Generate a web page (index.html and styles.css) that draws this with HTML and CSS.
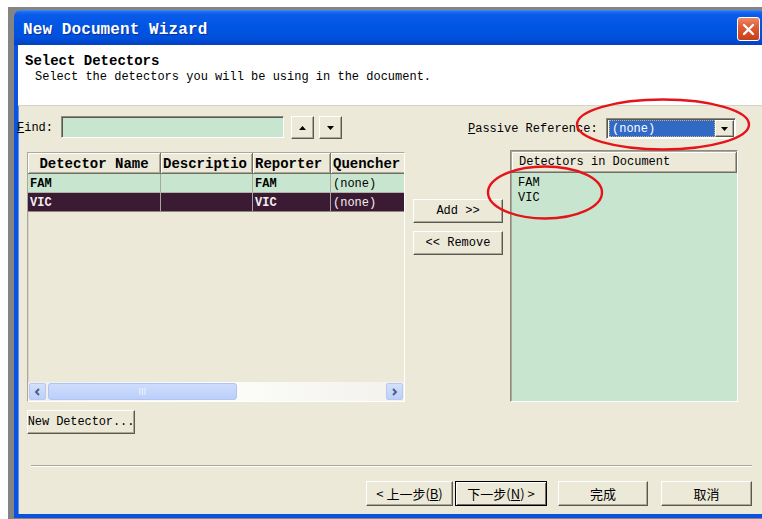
FILE: index.html
```html
<!DOCTYPE html>
<html>
<head>
<meta charset="utf-8">
<title>New Document Wizard</title>
<link rel="stylesheet" href="styles.css">
</head>
<body>
<div class="desk">
  <div class="window">
    <div class="titlebar">
      <span class="title">New Document Wizard</span>
      <span class="close">
        <svg width="13" height="13" viewBox="0 0 13 13"><path d="M2 2 L11 11 M11 2 L2 11" stroke="#fff" stroke-width="2.4" stroke-linecap="round"/></svg>
      </span>
    </div>
    <div class="frame">
      <div class="header">
        <div class="h-title">Select Detectors</div>
        <div class="h-sub">Select the detectors you will be using in the document.</div>
      </div>
      <div class="content">
        <div class="toprow">
          <div class="find">
            <span class="find-label"><u>F</u>ind:</span>
            <div class="field"></div>
            <button class="btn spin first"><svg width="7" height="4" viewBox="0 0 7 4"><path d="M3.5 0 L7 4 L0 4 Z" fill="#000"/></svg></button>
            <button class="btn spin"><svg width="7" height="4" viewBox="0 0 7 4"><path d="M0 0 L7 0 L3.5 4 Z" fill="#000"/></svg></button>
          </div>
          <div class="passive">
            <span class="passive-label"><u>P</u>assive Reference:</span>
            <div class="combo">
              <span class="combo-value"><span class="combo-text">(none)</span></span>
              <span class="btn combo-btn"><svg width="7" height="4" viewBox="0 0 7 4"><path d="M0 0 L7 0 L3.5 4 Z" fill="#000"/></svg></span>
            </div>
          </div>
        </div>

        <div class="main">
          <div class="grid">
            <div class="grid-head">
              <div class="hc c1 centered">Detector Name</div>
              <div class="hc c2">Descriptio</div>
              <div class="hc c3">Reporter</div>
              <div class="hc c4">Quencher</div>
            </div>
            <div class="grid-row">
              <div class="cell c1 name">FAM</div>
              <div class="cell c2"></div>
              <div class="cell c3 name">FAM</div>
              <div class="cell c4">(none)</div>
            </div>
            <div class="grid-row selected">
              <div class="cell c1 name">VIC</div>
              <div class="cell c2"></div>
              <div class="cell c3 name">VIC</div>
              <div class="cell c4">(none)</div>
            </div>
            <div class="grid-empty"></div>
            <div class="hscroll">
              <span class="sb-arrow"><svg width="7" height="8" viewBox="0 0 7 8"><path d="M5 1 L2 4 L5 7" fill="none" stroke="#4D6185" stroke-width="2"/></svg></span>
              <span class="sb-thumb"><svg width="8" height="7" viewBox="0 0 8 7"><path d="M1 0V7M3.5 0V7M6 0V7" stroke="#EEF3FE" stroke-width="1"/></svg></span>
              <span class="sb-track"></span>
              <span class="sb-arrow"><svg width="7" height="8" viewBox="0 0 7 8"><path d="M2 1 L5 4 L2 7" fill="none" stroke="#4D6185" stroke-width="2"/></svg></span>
            </div>
          </div>

          <div class="mid">
            <button class="btn move">Add &gt;&gt;</button>
            <button class="btn move">&lt;&lt; Remove</button>
          </div>

          <div class="doclist">
            <div class="doclist-head">Detectors in Document</div>
            <div class="doclist-items">
              <div class="item">FAM</div>
              <div class="item">VIC</div>
            </div>
          </div>
        </div>

        <button class="btn newdet">New Detector...</button>

        <div class="sep"></div>

        <div class="nav">
          <button class="btn nav-btn prev">&lt; 上一步(<u>B</u>)</button>
          <button class="btn nav-btn next">下一步(<u>N</u>) &gt;</button>
          <button class="btn nav-btn finish">完成</button>
          <button class="btn nav-btn cancel">取消</button>
        </div>
      </div>
    </div>
  </div>
</div>

<svg class="marks" width="762" height="519" viewBox="0 0 762 519">
  <ellipse cx="663" cy="124.5" rx="86" ry="25" fill="none" stroke="#E5141B" stroke-width="2.4"/>
  <ellipse cx="545" cy="192.5" rx="57" ry="26" fill="none" stroke="#E5141B" stroke-width="2.4"/>
</svg>
</body>
</html>
```

FILE: styles.css
```css
* { box-sizing: border-box; }

html, body { margin: 0; }

body {
  width: 762px;
  height: 519px;
  overflow: hidden;
  position: relative;
  background: #fff;
  font-family: "Liberation Mono", "Noto Sans CJK SC", monospace;
  font-size: 12px;
  color: #000;
}

u { text-decoration: underline; text-underline-offset: 1px; }

/* desktop strip behind the dialog */
.desk {
  margin: 7px 0 0 8px;
  height: 512px;
  background: #848484;
  padding: 3px 0 0 6px;
}

.window {
  width: 752px;
  height: 508px;
  display: flex;
  flex-direction: column;
}

/* Luna caption */
.titlebar {
  flex: none;
  height: 35px;
  border-radius: 7px 7px 0 0;
  background: linear-gradient(to bottom, #3E8EF7 0px, #1A6AEF 2px, #0A5AE8 5px, #0055E3 50%, #0050DC 80%, #0046CC 94%, #0C3FB4 100%);
  display: flex;
  align-items: center;
  padding: 3px 6px 0 9px;
}

.title {
  color: #fff;
  font-weight: bold;
  font-size: 16px;
  letter-spacing: 0.1px;
  margin-top: 2px;
  text-shadow: 1px 1px 0 #0A2E9A;
}

.close {
  margin-left: auto;
  width: 23px;
  height: 24px;
  border: 1px solid #fff;
  border-radius: 3px;
  background: linear-gradient(to bottom, #EC8B6C 0%, #E0603A 35%, #D24B22 75%, #C4401A 100%);
  display: flex;
  align-items: center;
  justify-content: center;
}

.frame {
  flex: 1;
  display: flex;
  flex-direction: column;
  background: #ECE9D8;
  border-left: 4px solid #0B52DC;
  border-right: 4px solid #0B52DC;
  border-bottom: 4px solid #0B52DC;
  box-shadow: inset 1px 0 0 #5F92EE;
}

.header {
  flex: none;
  height: 61px;
  background: #fff;
  border-bottom: 1px solid #D6D3C4;
  padding: 8px 0 0 7px;
}

.h-title {
  font-weight: bold;
  font-size: 14px;
  line-height: 16px;
}

.h-sub {
  padding-left: 10px;
  line-height: 16px;
}

.content {
  flex: 1;
  padding: 10px 0 0 9px;
  display: flex;
  flex-direction: column;
}

/* classic 3D push button */
.btn {
  font: inherit;
  color: #000;
  padding: 0;
  margin: 0;
  background: #ECE9D8;
  border: 1px solid;
  border-color: #fff #5A5950 #5A5950 #fff;
  box-shadow: inset -1px -1px 0 #ACA899;
  display: flex;
  align-items: center;
  justify-content: center;
  white-space: nowrap;
  overflow: hidden;
}

/* find + passive reference row */
.toprow {
  flex: none;
  width: 711px;
  height: 23px;
  display: flex;
}

.find {
  display: flex;
  align-items: center;
  margin-left: -10px;
}

.find-label { width: 36px; margin-right: 8px; }

.field {
  width: 223px;
  height: 22px;
  align-self: flex-start;
  background: #C8E6CF;
  border: 1px solid;
  border-color: #8E8C80 #fff #fff #8E8C80;
  box-shadow: inset 1px 1px 0 #5A5950;
}

.spin {
  width: 23px;
  height: 23px;
  margin-left: 5px;
}
.spin.first { margin-left: 7px; }

.passive {
  margin-left: auto;
  margin-right: 2px;
  display: flex;
  align-items: center;
  padding-top: 2px;
}

.passive-label { width: 130px; margin-right: 8px; }

.combo {
  width: 130px;
  height: 21px;
  display: flex;
  background: #fff;
  border: 1px solid;
  border-color: #8E8C80 #fff #fff #8E8C80;
  box-shadow: inset 1px 1px 0 #5A5950;
  padding: 1px 1px 1px 2px;
}

.combo-value {
  flex: 1;
  background: #316AC5;
  border: 1px dotted #C9B27A;
  display: flex;
  align-items: center;
  padding-left: 2px;
}

.combo-text { color: #fff; }

.combo-btn {
  width: 19px;
  flex: none;
}

/* detectors grid, buttons and document list */
.main {
  flex: none;
  margin-top: 11px;
  height: 252px;
  display: flex;
}

.grid {
  width: 378px;
  height: 250px;
  margin-top: 2px;
  display: flex;
  flex-direction: column;
  border: 1px solid;
  border-color: #ACA899 #fff #fff #ACA899;
  box-shadow: inset 1px 1px 0 #D8D5C6;
  overflow: hidden;
}

.grid-head, .grid-row {
  flex: none;
  display: flex;
  white-space: nowrap;
}

.grid-head { height: 21px; }

.c1 { width: 133px; }
.c2 { width: 92px; }
.c3 { width: 78px; }
.c4 { width: 90px; }

.hc {
  flex: none;
  font-weight: bold;
  font-size: 14px;
  line-height: 20px;
  padding: 1px 0 0 2px;
  overflow: hidden;
  background: #ECE9D8;
  border-right: 1px solid #716F64;
  border-bottom: 1px solid #716F64;
  box-shadow: inset 1px 1px 0 #fff, inset -1px -1px 0 #ACA899;
}

.hc.centered { text-align: center; padding-left: 0; }

.grid-row {
  height: 19px;
  background: #C8E6CF;
  border-bottom: 1px solid #B4B2A6;
}

.grid-row.selected {
  background: #3B1A33;
  color: #F2EEF0;
  border-bottom-color: #8A8880;
}

.cell {
  flex: none;
  line-height: 18px;
  padding: 1px 0 0 2px;
  overflow: hidden;
  border-right: 1px solid #A9A79C;
}

.cell.name { font-weight: bold; }

.grid-empty { flex: 1; }

.hscroll {
  flex: none;
  height: 19px;
  display: flex;
  align-items: center;
  gap: 2px;
  padding: 1px;
  background: linear-gradient(to right, #F0EFE8, #FDFDFB 50%, #F2F1EC);
}

.sb-arrow {
  width: 17px;
  height: 17px;
  flex: none;
  border: 1px solid #B6C8F3;
  border-radius: 2px;
  background: linear-gradient(to bottom, #D3E0FD, #BDD0FA);
  display: flex;
  align-items: center;
  justify-content: center;
}

.sb-thumb {
  width: 189px;
  height: 17px;
  flex: none;
  border: 1px solid #AFC4F3;
  border-radius: 3px;
  background: linear-gradient(to bottom, #CFDDFD, #BCCFFA);
  display: flex;
  align-items: center;
  justify-content: center;
}

.sb-track { flex: 1; }

.mid {
  width: 105px;
  flex: none;
  display: flex;
  flex-direction: column;
  gap: 8px;
  padding: 49px 0 0 8px;
}

.move {
  width: 90px;
  height: 24px;
}

.doclist {
  width: 228px;
  height: 252px;
  flex: none;
  display: flex;
  flex-direction: column;
  background: #C8E6CF;
  border: 1px solid;
  border-color: #8E8C80 #fff #fff #8E8C80;
  box-shadow: inset 1px 1px 0 #ACA899;
  padding: 1px 0 0 1px;
}

.doclist-head {
  flex: none;
  height: 21px;
  line-height: 21px;
  padding-left: 7px;
  background: #ECE9D8;
  border-right: 1px solid #716F64;
  border-bottom: 1px solid #716F64;
  box-shadow: inset 1px 1px 0 #fff, inset -1px -1px 0 #ACA899;
}

.doclist-items {
  padding: 3px 0 0 6px;
  line-height: 15px;
}

.newdet {
  flex: none;
  margin-top: 8px;
  width: 108px;
  height: 24px;
  letter-spacing: -0.1px;
}

.sep {
  flex: none;
  margin: 31px 0 0 4px;
  width: 721px;
  height: 2px;
  border-top: 1px solid #ACA899;
  border-bottom: 1px solid #fff;
}

.nav {
  flex: none;
  margin-top: 14px;
  width: 725px;
  display: flex;
  justify-content: flex-end;
}

.nav-btn {
  height: 25px;
  font-family: "Noto Sans CJK SC", "Liberation Mono", sans-serif;
  font-size: 13px;
}

.prev { width: 87px; }
.next {
  width: 92px;
  margin-left: 2px;
  border: 1px solid #000;
  box-shadow: inset 1px 1px 0 #fff, inset -1px -1px 0 #716F64;
}
.finish { width: 90px; margin-left: 11px; }
.cancel { width: 91px; margin-left: 13px; }

/* annotation marks drawn over the dialog */
.marks {
  position: absolute;
  top: 0;
  left: 0;
  pointer-events: none;
}
```
